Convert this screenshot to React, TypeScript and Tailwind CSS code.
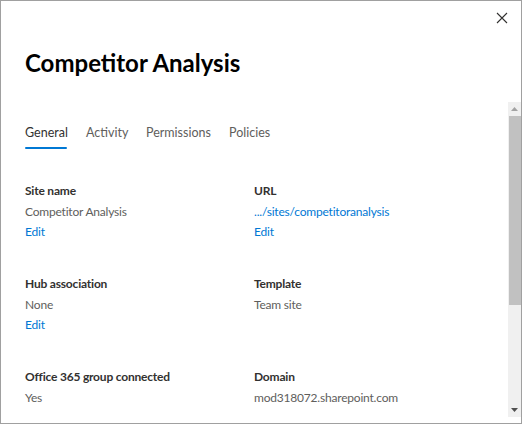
import React from "react";

const font = { fontFamily: 'Lato, "Open Sans", sans-serif' };

function Field({ label, value, link, edit }: { label: string; value: string; link?: boolean; edit?: boolean }) {
  return (
    <div className="flex flex-col tracking-[-0.2px]">
      <div className="text-[12px] leading-[20px] font-bold text-[#323130]">{label}</div>
      <div className={`text-[12px] leading-[20px] mt-[1px] ${link ? "text-[#0078d4]" : "text-[#605e5c]"}`}>{value}</div>
      {edit && <div className="text-[12px] leading-[20px] text-[#0078d4]">Edit</div>}
    </div>
  );
}

export default function App() {
  const tabs = [
    { t: "General", w: "w-[61px]" },
    { t: "Activity", w: "w-[60px]" },
    { t: "Permissions", w: "w-[83px]" },
    { t: "Policies", w: "w-[60px]" },
  ];
  return (
    <div style={font} className="w-[522px] h-[424px] bg-white border border-[#a0a0a0] flex flex-col overflow-hidden">
      <div className="h-[101px] flex flex-col relative">
        <button className="absolute right-[13px] top-[11px] w-[12px] h-[12px] text-[#323130]">
          <svg viewBox="0 0 12 12" width="12" height="12">
            <path d="M1 1 L11 11 M11 1 L1 11" stroke="currentColor" strokeWidth="1.1" fill="none" />
          </svg>
        </button>
        <h1 className="ml-[24px] mt-[46px] text-[24px] leading-[32px] font-bold text-black">
          Competitor Analysis
        </h1>
      </div>
      <div className="flex flex-1 min-h-0">
        <div className="flex-1 pl-[24px] overflow-hidden">
          <div className="flex mt-[21px] h-[26px]">
            {tabs.map((x, i) => (
              <div key={x.t} className={`${x.w} flex`}>
                <div className="flex flex-col">
                  <span className={`text-[12.5px] leading-[20px] ${i === 0 ? "text-[#323130]" : "text-[#605e5c]"}`}>{x.t}</span>
                  {i === 0 && <div className="mt-[4px] h-[2px] w-[42px] bg-[#0078d4] rounded-[1px]" />}
                </div>
              </div>
            ))}
          </div>
          <div className="grid grid-cols-[229px_1fr] mt-[32px] gap-y-[32px]">
            <Field label="Site name" value="Competitor Analysis" edit />
            <Field label="URL" value=".../sites/competitoranalysis" link edit />
            <Field label="Hub association" value="None" edit />
            <Field label="Template" value="Team site" />
            <Field label="Office 365 group connected" value="Yes" />
            <Field label="Domain" value="mod318072.sharepoint.com" />
          </div>
        </div>
        <div className="w-[13px] bg-[#f0f0f0] flex flex-col items-center">
          <div className="h-[14px] flex items-center justify-center">
            <svg width="7" height="4" viewBox="0 0 7 4"><path d="M3.5 0 L7 4 L0 4 Z" fill="#a3a3a3" /></svg>
          </div>
          <div className="w-[12px] h-[189px] bg-[#c1c1c1]" />
          <div className="flex-1" />
          <div className="h-[14px] flex items-center justify-center">
            <svg width="7" height="4" viewBox="0 0 7 4"><path d="M0 0 L7 0 L3.5 4 Z" fill="#505050" /></svg>
          </div>
        </div>
      </div>
      <div className="h-[6px]" />
    </div>
  );
}
